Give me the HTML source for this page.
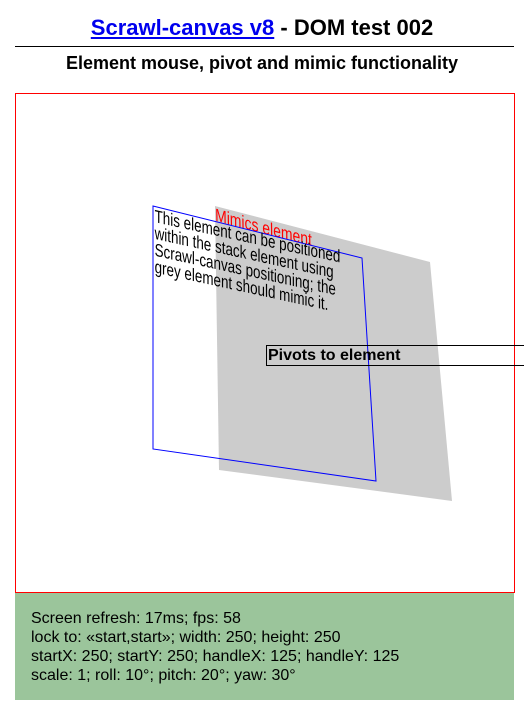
<!DOCTYPE html>
<html><head><meta charset="utf-8">
<style>
html,body{margin:0;padding:0;background:#fff;}
body{width:524px;height:707px;position:relative;overflow:hidden;font-family:"Liberation Sans",Arial,sans-serif;}
h1{position:absolute;top:13px;left:0;width:524px;text-align:center;margin:0;font-size:22px;font-weight:bold;line-height:30px;}
h1 a{color:#0000ee;text-decoration:underline;}
.hr{position:absolute;left:15px;width:499px;top:46px;height:1px;background:#000;}
h2{position:absolute;top:51px;left:0;width:524px;text-align:center;margin:0;font-size:18px;font-weight:bold;line-height:24px;}
.stage{position:absolute;left:15px;top:93px;width:498px;height:498px;border:1px solid #f00;}
.info{position:absolute;left:15px;top:593px;width:499px;height:107px;background:#9bc59b;font-size:16px;line-height:19px;color:#000;}
.info div{position:absolute;left:16px;top:16px;}
.pivot{position:absolute;left:266px;top:345px;width:270px;height:21px;border:1px solid #000;font-weight:bold;font-size:16px;line-height:19px;padding-left:1px;box-sizing:border-box;}
</style></head><body>
<h1><a>Scrawl-canvas v8</a> - DOM test 002</h1>
<div class="hr"></div>
<h2>Element mouse, pivot and mimic functionality</h2>
<div class="stage"></div>
<svg width="524" height="707" style="position:absolute;left:0;top:0" font-family="Liberation Sans, Arial, sans-serif">
<polygon points="215,206 430,262 452,501 219,470" fill="#cccccc"/>
<g transform="matrix(0.82,0.214,0.016,1.056,215,206)">
<text x="0" y="14" font-size="17" fill="#ff0000">Mimics element</text>
</g>
<polygon points="153,206 362,258 376,481 153,449" fill="none" stroke="#0000ff" stroke-width="1"/>
<g transform="matrix(0.79,0.172,0,1.05,153,206)" font-size="17" fill="#000">
<text x="2" y="15">This element can be positioned</text>
<text x="2" y="31">within the stack element using</text>
<text x="2" y="47">Scrawl-canvas positioning; the</text>
<text x="2" y="63">grey element should mimic it.</text>
</g>
</svg>
<div class="pivot">Pivots to element</div>
<div class="info"><div>Screen refresh: 17ms; fps: 58<br>lock to: «start,start»; width: 250; height: 250<br>startX: 250; startY: 250; handleX: 125; handleY: 125<br>scale: 1; roll: 10°; pitch: 20°; yaw: 30°</div></div>
</body></html>
